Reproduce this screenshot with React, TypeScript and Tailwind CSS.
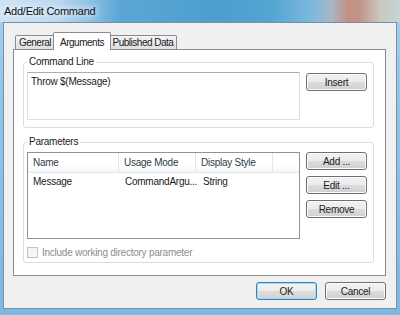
import React from "react";

function Btn({ label, w = "w-[61px]", focused = false }: { label: string; w?: string; focused?: boolean }) {
  return (
    <div
      className={
        "h-[18px] " +
        w +
        " flex items-center justify-center rounded-[3px] border text-[#1b1b1b] " +
        (focused
          ? "border-[#3c7fb1] shadow-[inset_0_0_0_1px_#9fdcf6] bg-[linear-gradient(180deg,#f4f4f4_0%,#ececec_50%,#dedede_51%,#d2d2d2_100%)]"
          : "border-[#707070] shadow-[inset_0_0_0_1px_#fbfbfb] bg-[linear-gradient(180deg,#f2f2f2_0%,#ebebeb_50%,#dddddd_51%,#cfcfcf_100%)]")
      }
    >
      {label}
    </div>
  );
}

function Group({ title, h, children, className = "" }: { title: string; h: string; children: React.ReactNode; className?: string }) {
  return (
    <div className={"relative w-[351px] " + h + " rounded-[3px] border border-[#d5dfe5] " + className}>
      <div className="absolute -top-[7px] left-[3px] bg-white px-[2px] leading-[12px] text-[#1b1b1b]">{title}</div>
      {children}
    </div>
  );
}

export default function App() {
  return (
    <div className="w-[400px] h-[315px] flex flex-col overflow-hidden bg-[linear-gradient(180deg,#a9cfe8_0%,#8fc6ec_30%,#79b9e4_100%)] font-['Liberation_Sans',Arial,sans-serif] text-[10px] tracking-[-0.25px] text-[#1b1b1b]">
      {/* Title bar */}
      <div className="h-[22px] shrink-0 flex items-center pl-[4px] text-[11px] text-[#111] bg-[linear-gradient(90deg,#cfe4f4_0%,#bcdaf0_14%,#8fc2e6_22%,#5aa7d5_30%,#4c9ecf_55%,#55a5d3_68%,#7db9dd_78%,#a9b6c4_83%,#c48f82_87%,#c29489_90%,#c8c8c0_95%,#c4d6d6_100%)]">
        <span className="[text-shadow:0_0_6px_#ffffff,0_0_10px_#ffffff]">Add/Edit Command</span>
      </div>

      {/* Client area */}
      <div className="flex-1 mx-[3px] mb-[6px] border border-[#7b8ea3] bg-[#f0f0f0] pl-[9px] pt-[9px]">
        {/* Tab strip */}
        <div className="h-[17px] flex items-end pl-[2px] tracking-[-0.5px]">
          <div className="w-[40px] h-[14px] flex items-center justify-center rounded-t-[2px] border border-b-0 border-[#898c95] bg-[linear-gradient(180deg,#f4f4f4_0%,#ebebeb_50%,#dedede_100%)]">
            General
          </div>
          <div className="relative z-10 -mx-[2px] -mb-px w-[58px] h-[18px] flex items-start justify-center pt-[2px] rounded-t-[2px] border border-b-0 border-[#898c95] bg-white">
            Arguments
          </div>
          <div className="w-[68px] h-[14px] flex items-center justify-center rounded-t-[2px] border border-b-0 border-[#898c95] bg-[linear-gradient(180deg,#f4f4f4_0%,#ebebeb_50%,#dedede_100%)]">
            Published Data
          </div>
        </div>

        {/* Tab panel */}
        <div className="w-[373px] h-[227px] border border-[#898c95] bg-white pl-[9px] pt-[12px]">
          <Group title="Command Line" h="h-[66px]">
            <div className="flex pl-[3px] pt-[9px]">
              <div className="w-[273px] h-[48px] border border-[#dbdfe6] border-t-[#abadb3] px-[3px] pt-[2px] leading-[13px]">
                Throw $(Message)
              </div>
              <div className="ml-[6px] mt-[1px]">
                <Btn label="Insert" />
              </div>
            </div>
          </Group>

          <Group title="Parameters" h="h-[121px]" className="mt-[14px]">
            <div className="flex pl-[3px] pt-[9px]">
              <div className="flex flex-col">
                <div className="w-[273px] h-[87px] border border-[#8e939b] bg-white">
                  <div className="h-[20px] flex border-b border-[#e3e5e8] bg-[linear-gradient(180deg,#ffffff_0%,#ffffff_60%,#f6f7f8_100%)] text-[#2f3a46]">
                    <div className="w-[91px] flex items-center pl-[5px] border-r border-[#e3e5e8]">Name</div>
                    <div className="w-[77px] flex items-center pl-[5px] border-r border-[#e3e5e8]">Usage Mode</div>
                    <div className="w-[77px] flex items-center pl-[5px] border-r border-[#e3e5e8]">Display Style</div>
                  </div>
                  <div className="h-[16px] flex items-center">
                    <div className="w-[92px] pl-[5px]">Message</div>
                    <div className="w-[78px] pl-[5px]">CommandArgu...</div>
                    <div className="w-[78px] pl-[5px]">String</div>
                  </div>
                </div>
                <div className="mt-[6px] flex items-center">
                  <div className="w-[11px] h-[11px] border border-[#c2c2c2] bg-[linear-gradient(135deg,#f0f0f0,#fafafa)]" />
                  <span className="ml-[4px] text-[#8d8d8d]">Include working directory parameter</span>
                </div>
              </div>
              <div className="ml-[6px] flex flex-col gap-[6px]">
                <Btn label="Add ..." />
                <Btn label="Edit ..." />
                <Btn label="Remove" />
              </div>
            </div>
          </Group>
        </div>

        {/* Footer buttons */}
        <div className="w-[373px] mt-[6px] flex justify-end gap-[8px]">
          <Btn label="OK" focused />
          <Btn label="Cancel" />
        </div>
      </div>
    </div>
  );
}
